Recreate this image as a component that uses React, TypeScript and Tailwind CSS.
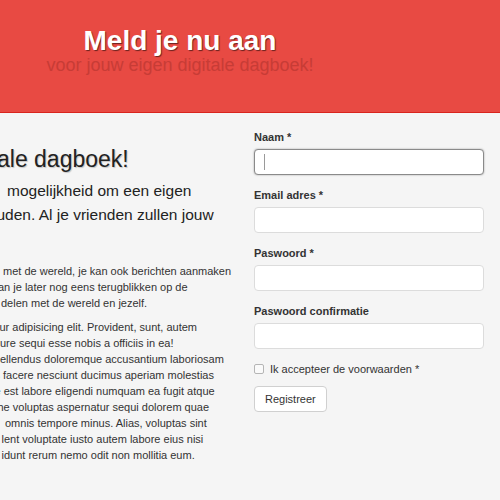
const para1 = [
  { text: 'met de wereld, je kan ook berichten aanmaken', cls: 'pl-[3px]' },
  { text: 'an je later nog eens terugblikken op de', cls: '-ml-[2px]' },
  { text: 'delen met de wereld en jezelf.', cls: 'pl-[1px]' },
]

const para2 = [
  { text: 'ur adipisicing elit. Provident, sunt, autem', cls: '-ml-[0.5px]' },
  { text: 'ure sequi esse nobis a officiis in ea!', cls: 'pl-0' },
  { text: 'ellendus doloremque accusantium laboriosam', cls: 'pl-0' },
  { text: 's facere nesciunt ducimus aperiam molestias', cls: '-ml-[5.5px]' },
  { text: 'e est labore eligendi numquam ea fugit atque', cls: '-ml-[5.5px]' },
  { text: 'he voluptas aspernatur sequi dolorem quae', cls: '-ml-[2.5px]' },
  { text: 'omnis tempore minus. Alias, voluptas sint', cls: 'pl-[5px]' },
  { text: 'lent voluptate iusto autem labore eius nisi', cls: 'pl-[1.5px]' },
  { text: 'idunt rerum nemo odit non mollitia eum.', cls: 'pl-[1.5px]' },
]

const fields = [
  { label: 'Naam *', type: 'text', focused: true },
  { label: 'Email adres *', type: 'email' },
  { label: 'Paswoord *', type: 'password' },
  { label: 'Paswoord confirmatie', type: 'password' },
]

const Field = ({
  label,
  type,
  focused,
}: {
  label: string
  type: string
  focused?: boolean
}) => (
  <div className="mb-3">
    <label className="mb-1 block text-[11px] font-bold leading-4 text-[#333]">
      {label}
    </label>
    <div className="relative">
      <input
        type={type}
        className={
          focused
            ? 'block h-[26px] w-[230px] rounded-[4px] border border-[#8a8a8a] bg-white shadow-[0_0_2px_rgba(0,0,0,0.35)] outline-none'
            : 'block h-[26px] w-[230px] rounded-[4px] border border-[#dcdcdc] bg-white outline-none'
        }
      />
      {focused && (
        <span className="absolute left-[10px] top-[5px] h-[16px] w-px bg-[#9a9a9a]" />
      )}
    </div>
  </div>
)

export default function App() {
  return (
    <div className="h-[500px] w-[500px] overflow-hidden bg-[#f5f5f5] font-['Liberation_Sans',Arial,sans-serif] text-[#333]">
      <header className="h-[113px] border-b border-[#d9241d] bg-[#e84a43] pt-[27px]">
        <div className="w-[360px] text-center">
          <h1 className="text-[28px] font-bold leading-[28px] text-white [text-shadow:1px_1px_1px_rgba(0,0,0,0.55)]">
            Meld je nu aan
          </h1>
          <p className="text-[18px] leading-[20px] text-[#c73c36]">
            voor jouw eigen digitale dagboek!
          </p>
        </div>
      </header>

      <main className="flex">
        <section className="w-[254px] shrink-0 overflow-hidden whitespace-nowrap">
          <h2 className="-ml-[3px] mt-[31.7px] text-[23px] leading-[28px] text-[#222] [text-shadow:1px_1px_1px_rgba(0,0,0,0.2)]">
            ale dagboek!
          </h2>
          <div className="mt-[6px] text-[15.5px] leading-[24px] text-[#222]">
            <p className="pl-[7px]">mogelijkheid om een eigen</p>
            <p className="-ml-[3.5px]">uden. Al je vrienden zullen jouw</p>
          </div>
          <div className="mt-[36px] text-[11px] leading-4">
            {para1.map((l) => (
              <div key={l.text} className={l.cls}>
                {l.text}
              </div>
            ))}
          </div>
          <div className="mt-2 text-[11px] leading-4">
            {para2.map((l) => (
              <div key={l.text} className={l.cls}>
                {l.text}
              </div>
            ))}
          </div>
        </section>

        <form className="pt-[16px]">
          {fields.map((f) => (
            <Field key={f.label} {...f} />
          ))}
          <label className="flex h-4 items-center gap-[6px] text-[11px] leading-4">
            <span className="h-[10px] w-[10px] rounded-[2px] border border-[#b5b5b5] bg-[#fafafa]" />
            Ik accepteer de voorwaarden *
          </label>
          <button
            type="button"
            className="mt-[9px] h-[26px] rounded-[4px] border border-[#d0d0d0] bg-white px-[10px] text-[11px] text-[#333]"
          >
            Registreer
          </button>
        </form>
      </main>
    </div>
  )
}
